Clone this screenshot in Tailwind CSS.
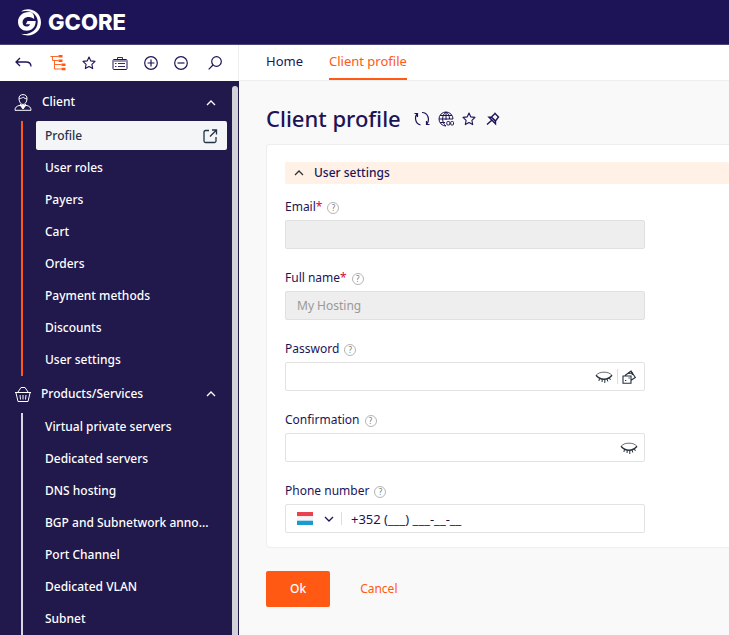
<!DOCTYPE html>
<html lang="en">
<head>
  <meta charset="UTF-8">
  <meta name="viewport" content="width=device-width, initial-scale=1.0">
  <title>Client profile - Gcore</title>
  <script src="https://cdn.jsdelivr.net/npm/@tailwindcss/browser@4"></script>
</head>
<body class="flex flex-col h-screen overflow-hidden bg-[#f9f9f9] text-[#1d1457] text-xs leading-5 font-['Noto_Sans',sans-serif]">
  <!-- shared icons -->
  <svg class="hidden">
    <symbol id="star" viewBox="0 0 14 14"><path d="M7 1l1.800 3.900 4.200.5-3.100 2.900.8 4.300L7 10.500l-3.700 2.100.8-4.300L1 5.400l4.200-.5z" fill="none" stroke="currentColor" stroke-width="1.100" stroke-linejoin="round"/></symbol>
    <symbol id="up" viewBox="0 0 10 6"><path d="M1 5l4-4 4 4" fill="none" stroke="currentColor" stroke-width="1.300"/></symbol>
    <symbol id="eye" viewBox="0 0 18 13"><path d="M1 4.500C3 1.800 6 1.200 9 1.200s6 .6 8 3.300" fill="none" stroke="currentColor" stroke-width=".7"/><path d="M1 4.300C3.500 7.300 6 8.300 9 8.300s5.500-1 8-4" fill="none" stroke="currentColor" stroke-width="1.500"/><path d="M4.500 7.500l-.6 2.500M7.300 8.300L7 11M9.800 8.500v3.500M12 8l.8 2.500M14.500 7l.9 2" stroke="currentColor"/></symbol>
  </svg>

  <header class="flex items-center shrink-0 h-[45px] px-[17px] bg-[#1d1457] text-white border-b border-[#4b4478]">
    <a href="#" class="flex items-center gap-[7px]" aria-label="Gcore">
      <svg class="w-6 h-7" viewBox="0 0 24 28" fill="#fff">
        <path d="M4 3.500C12-2 24 3.500 24 14.200 24 24.500 13.500 30.500 4 25.800c8 1.500 16.500-3 16.700-11.800C21 6.500 13.500 1 4 3.500z"/>
        <path d="M15 4.500C8 2.500 1 7 1 14c0 5 3.800 8.800 8.700 8.800 5.300 0 9-3.900 9-9.800h-8.200l-1.700 3.200h4.400c-.8 1.500-2 2.300-3.600 2.300-2.400 0-4-1.600-4-4 0-4 4-6.300 7.600-5.200 1.600.4 3 1 4 2C17.300 8.500 16.800 6.300 15 4.500z"/>
      </svg>
      <span class="text-[22px] leading-6 font-extrabold font-['Inter',sans-serif]">GCORE</span>
    </a>
  </header>

  <div class="flex shrink-0 h-9 bg-white">
    <div class="flex items-center justify-between shrink-0 w-[239px] pl-[15px] pr-4 border-r border-[#eee]">
      <button aria-label="Back"><svg class="w-[17px] h-3" viewBox="0 0 17 12" fill="none" stroke="currentColor" stroke-width="1.300"><path d="M5 1L1 5l4 4M1 5h10c3 0 5 1.500 5 4.500"/></svg></button>
      <button aria-label="Tree" class="ml-0.5 text-[#ff5913]"><svg class="w-4 h-4" viewBox="0 0 16 16"><path d="M.5 1.500h8M2.500 1v4.500h6M4.500 5.500v8.500h7M4.500 9.500h7" fill="none" stroke="currentColor" stroke-width=".9"/><path d="M8.500 0h4v2.500h-4zM8.500 4.500h4V7h-4zM11.500 8.500h4V11h-4zM11.500 12.800h4v2.500h-4z" fill="currentColor"/></svg></button>
      <button aria-label="Favourites"><svg class="w-3.5 h-3.5"><use href="#star"/></svg></button>
      <button aria-label="Tasks"><svg class="w-4 h-4" viewBox="0 0 16 16" fill="none" stroke="currentColor"><rect x="1" y="4.500" width="14" height="10" rx="1"/><path d="M5.500 4.500v-2h5v2M6 8.500h7M6 11.500h7M3 8.500h1.500M3 11.500h1.500M2 6h12" stroke-width=".9"/></svg></button>
      <button aria-label="Expand all"><svg class="w-3.5 h-3.5" viewBox="0 0 14 14" fill="none" stroke="currentColor" stroke-width="1.200"><circle cx="7" cy="7" r="6.300"/><path d="M3.500 7h7M7 3.500v7"/></svg></button>
      <button aria-label="Collapse all"><svg class="w-3.5 h-3.5" viewBox="0 0 14 14" fill="none" stroke="currentColor" stroke-width="1.200"><circle cx="7" cy="7" r="6.300"/><path d="M3.500 7h7"/></svg></button>
      <button aria-label="Search" class="ml-1"><svg class="w-3.5 h-3.5" viewBox="0 0 14 14" fill="none" stroke="currentColor" stroke-width="1.200"><circle cx="8.500" cy="5.500" r="4.800"/><path d="M5 9L.7 13.300"/></svg></button>
    </div>
    <nav class="flex flex-1 gap-[26px] pl-[27px] border-b border-[#eee] text-[13px]">
      <a href="#" class="flex items-center pb-1">Home</a>
      <a href="#" class="flex items-center pb-0.5 text-[#ff5913] border-b-2 border-[#ff5913]">Client profile</a>
    </nav>
  </div>

  <div class="flex flex-1 min-h-0">
    <aside class="flex shrink-0 w-[239px] bg-[#21184b] text-white font-medium">
      <nav class="flex-1 min-w-0 pt-1.5 pl-[14px] pr-[5px] overflow-hidden">
        <button class="flex items-center w-full h-[30px] pr-[11px] text-left">
          <svg class="w-[18px] h-[17px] mr-[10px]" viewBox="0 0 18 17" fill="none" stroke="currentColor"><path d="M5 5c-.3-3 1.500-4.400 4-4.400S13.300 2 13 5c-.2 3-2 5.500-4 5.500S5.200 8 5 5zM5.200 4.500c2 0 3-.5 4-1.500 1 1.300 2.300 1.800 3.700 1.800M1 16.300h16c0-3-1.500-4.200-5-5l-1.200-1.500M1 16.300c0-3 1.500-4.200 5-5l1.200-1.500"/><path d="M6 11l3 4 3-4-3 .5z" fill="currentColor"/></svg>
          <span class="flex-1">Client</span>
          <svg class="w-[10px] h-1.5 mt-0.5"><use href="#up"/></svg>
        </button>
        <ul class="ml-[7px] pl-[13px] mt-1 border-l-2 border-[#ff5913]">
          <li><a href="#" class="flex items-center justify-between h-[29px] px-[9px] mb-0.5 rounded-xs bg-[#f3f5f6] text-[#24324a]">Profile
            <svg class="w-4 h-4" viewBox="0 0 16 16" fill="none" stroke="currentColor" stroke-width="1.300"><path d="M7 2.500H3.500Q2 2.500 2 4v9q0 1.500 1.500 1.500h9Q14 14.500 14 13V9M10 2h4.500v4.500M14.500 2L8 8.500"/></svg></a></li>
          <li><a href="#" class="block px-[9px] py-1.5">User roles</a></li>
          <li><a href="#" class="block px-[9px] py-1.5">Payers</a></li>
          <li><a href="#" class="block px-[9px] py-1.5">Cart</a></li>
          <li><a href="#" class="block px-[9px] py-1.5">Orders</a></li>
          <li><a href="#" class="block px-[9px] py-1.5">Payment methods</a></li>
          <li><a href="#" class="block px-[9px] py-1.5">Discounts</a></li>
          <li><a href="#" class="block px-[9px] py-1.5">User settings</a></li>
        </ul>
        <button class="flex items-center w-full h-[30px] mt-[3px] pr-[11px] text-left">
          <svg class="w-[18px] h-[17px] mr-[9px]" viewBox="0 0 18 17" fill="none" stroke="currentColor"><path d="M1 6.500h16M2 7l2 8.500h10L16 7M4 6l3-4.500M14 6l-3-4.500M7 1.500h4M6 9l.5 4.500M9 9v4.500M12 9l-.5 4.500"/></svg>
          <span class="flex-1">Products/Services</span>
          <svg class="w-[10px] h-1.5"><use href="#up"/></svg>
        </button>
        <ul class="ml-[7px] pl-[13px] mt-1 border-l-2 border-[#d9d7e0]">
          <li><a href="#" class="block px-[9px] pt-1 pb-1.5">Virtual private servers</a></li>
          <li><a href="#" class="block px-[9px] py-1.5">Dedicated servers</a></li>
          <li><a href="#" class="block px-[9px] py-1.5">DNS hosting</a></li>
          <li><a href="#" class="block px-[9px] py-1.5">BGP and Subnetwork anno...</a></li>
          <li><a href="#" class="block px-[9px] py-1.5">Port Channel</a></li>
          <li><a href="#" class="block px-[9px] py-1.5">Dedicated VLAN</a></li>
          <li><a href="#" class="block px-[9px] py-1.5">Subnet</a></li>
        </ul>
      </nav>
      <div class="w-[7px] pt-[5px] pr-px"><div class="h-full rounded-t-full bg-[#d3d1d8]"></div></div>
    </aside>

    <main class="flex-1 min-w-0 pl-[27px] pt-[22px] overflow-hidden">
      <div class="flex items-center h-[30px] mb-[11px]">
        <h1 class="mr-[13px] text-[22px] leading-7 font-medium">Client profile</h1>
        <div class="flex items-center gap-2 mt-0.5">
          <button aria-label="Refresh"><svg class="w-4 h-4" viewBox="0 0 16 16" fill="none" stroke="currentColor" stroke-width="1.200"><path d="M6.500 14C1 12.500.5 6 3 3M.5 2.500h3V6M8 1.500c6 0 8 7 5 11.500M15.500 13.500h-3V10"/></svg></button>
          <button aria-label="Language"><svg class="w-4 h-4" viewBox="0 0 16 16" fill="none" stroke="currentColor"><path d="M8 15A7 7 0 1 1 15 8M8 1C3.500 4 3.500 12 8 15M8 1c2.500 1.500 3.500 4 3.500 7M8 1v8M2 4.500h12M1 8h14M2 11.500h5"/><rect x="8.800" y="10.500" width="3" height="3.500" rx="1"/><rect x="12.700" y="10.500" width="2.800" height="3.500" rx="1"/></svg></button>
          <button aria-label="Add to favourites"><svg class="w-3.5 h-3.5"><use href="#star"/></svg></button>
          <button aria-label="Pin" class="ml-0.5"><svg class="w-3.5 h-3.5" viewBox="0 0 14 14" fill="none" stroke="currentColor" stroke-width="1.400"><path d="M9 1.500l3.500 3.500L9.500 9l-4-4zM3 5.200h2.500l4 4v2.500zM5.500 8.500l-4.500 4M8.500 1l4.500 4.500"/></svg></button>
        </div>
      </div>

      <form>
        <section class="pl-[18px] pt-[17px] pb-3.5 mb-[23px] bg-white border border-r-0 border-[#eee] rounded-l-sm">
          <button type="button" class="flex items-center gap-[10px] w-full h-[22px] mb-[13px] pl-[9px] bg-[#fff1e6] rounded-xs font-medium">
            <svg class="w-[10px] h-1.5 text-[#333]"><use href="#up"/></svg>User settings
          </button>
          <div class="flex flex-col gap-[19px] w-[360px] max-w-full">
            <div>
              <div class="flex items-center gap-[5px] h-5 mb-[3px]"><label for="email">Email<span class="text-[#d6083b]">*</span></label><span class="flex items-center justify-center size-3 mt-0.5 border border-[#b5b5b5] rounded-full text-[8px] text-[#777]">?</span></div>
              <input id="email" type="email" disabled class="block w-full h-[29px] px-[11px] bg-[#eee] border border-[#e0e0e0] rounded-xs">
            </div>
            <div>
              <div class="flex items-center gap-[5px] h-5 mb-[3px]"><label for="fullname">Full name<span class="text-[#d6083b]">*</span></label><span class="flex items-center justify-center size-3 mt-0.5 border border-[#b5b5b5] rounded-full text-[8px] text-[#777]">?</span></div>
              <input id="fullname" type="text" value="My Hosting" disabled class="block w-full h-[29px] px-[11px] bg-[#eee] border border-[#e0e0e0] rounded-xs text-[#999]">
            </div>
            <div>
              <div class="flex items-center gap-[5px] h-5 mb-[3px]"><label for="password">Password</label><span class="flex items-center justify-center size-3 mt-0.5 border border-[#b5b5b5] rounded-full text-[8px] text-[#777]">?</span></div>
              <div class="flex items-center h-[29px] px-2 border border-[#e2e2e2] rounded-xs text-[#26313d]">
                <input id="password" type="password" class="flex-1 min-w-0 outline-none">
                <button type="button" aria-label="Show password"><svg class="w-[18px] h-[13px] mt-0.5"><use href="#eye"/></svg></button>
                <span class="w-px h-[15px] mx-1 bg-[#ddd]"></span>
                <button type="button" aria-label="Generate password"><svg class="w-3.5 h-3.5" viewBox="0 0 14 14" fill="none" stroke="currentColor" stroke-width="1.100"><path d="M1 6h8v7.300H1zM3 5.500l6-4.500 4.300 6.500L9.500 10M6 3.500l5-.5M9 1l1.500 4"/><path d="M3 10.500h1.300M6.500 8h1.300"/></svg></button>
              </div>
            </div>
            <div>
              <div class="flex items-center gap-[5px] h-5 mb-[3px]"><label for="confirmation">Confirmation</label><span class="flex items-center justify-center size-3 mt-0.5 border border-[#b5b5b5] rounded-full text-[8px] text-[#777]">?</span></div>
              <div class="flex items-center h-[29px] pl-2 pr-1.5 border border-[#e2e2e2] rounded-xs text-[#26313d]">
                <input id="confirmation" type="password" class="flex-1 min-w-0 outline-none">
                <button type="button" aria-label="Show confirmation"><svg class="w-[18px] h-[13px] mt-0.5"><use href="#eye"/></svg></button>
              </div>
            </div>
            <div>
              <div class="flex items-center gap-[5px] h-5 mb-[3px]"><label for="phone">Phone number</label><span class="flex items-center justify-center size-3 mt-0.5 border border-[#b5b5b5] rounded-full text-[8px] text-[#777]">?</span></div>
              <div class="flex items-center h-[29px] pl-[11px] border border-[#e2e2e2] rounded-xs">
                <div class="relative flex items-center gap-[11px] pr-[7px] border-r border-[#ddd]">
                  <svg class="w-4 h-[13px]" viewBox="0 0 16 13"><path fill="#e8414f" d="M0 0h16v4.300H0z"/><path fill="#f4f4f4" d="M0 4.300h16v4.400H0z"/><path fill="#1b9ad2" d="M0 8.700h16V13H0z"/></svg>
                  <svg class="w-[10px] h-1.5 rotate-180"><use href="#up"/></svg>
                  <select aria-label="Country" class="absolute inset-0 w-full appearance-none text-transparent"><option>Luxembourg</option></select>
                </div>
                <input id="phone" type="tel" value="+352 (___) ___-__-__" class="flex-1 min-w-0 px-[9px] text-[13px] outline-none">
              </div>
            </div>
          </div>
        </section>
        <div class="flex items-center gap-[30px]">
          <button type="submit" class="h-9 px-6 rounded-xs bg-[#ff5913] text-white font-medium">Ok</button>
          <a href="#" class="text-[#ff5913]">Cancel</a>
        </div>
      </form>
    </main>
  </div>
</body>
</html>
